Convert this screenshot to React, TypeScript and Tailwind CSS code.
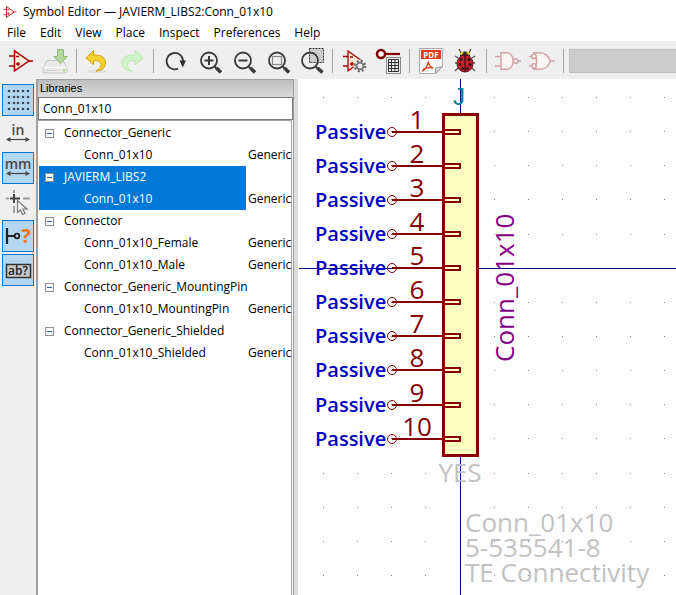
import React from "react";

type IconProps = { children: React.ReactNode };

function Icon({ children }: IconProps) {
  return (
    <svg viewBox="0 0 26 26" className="size-[26px]" fill="none" aria-hidden="true">
      {children}
    </svg>
  );
}

function ToolButton({ label, children, disabled }: { label: string; children: React.ReactNode; disabled?: boolean }) {
  return (
    <button type="button" aria-label={label} title={label} disabled={disabled} className="flex h-8 w-[34px] shrink-0 items-center justify-center">
      <Icon>{children}</Icon>
    </button>
  );
}

function Separator() {
  return (
    <div className="flex w-[9px] shrink-0 justify-center">
      <div className="h-6 w-px bg-[#a5a5a5]" />
    </div>
  );
}

function OpAmp() {
  return (
    <g stroke="#a80000" strokeWidth="1.3">
      <path d="M1 8h5M1 18h5M20 13h5" />
      <path d="M6.5 2.8 21 13 6.5 22.8z" fill="#fbeedd" strokeWidth="1.5" />
      <path d="M8 8.5h3M8 16h4M10 14v4" />
    </g>
  );
}

function Lens({ children, cx = 13 }: { children?: React.ReactNode; cx?: number }) {
  return (
    <g stroke="#3a3a3a">
      <circle cx={cx} cy="12.5" r="8" strokeWidth="1.8" />
      <path d={cx === 13 ? "M18.5 18.5 20.5 20.5" : "M17.5 18.5 19.5 20.5"} strokeWidth="2" />
      <path d={cx === 13 ? "M20.5 20 25 24.5" : "M19.5 20 24.5 24.5"} strokeWidth="3.6" />
      {children}
    </g>
  );
}

function Gear() {
  return (
    <g>
      <circle cx="19" cy="18" r="6.5" fill="#efefef" />
      <circle cx="19" cy="18" r="5.3" stroke="#626262" strokeWidth="1.8" strokeDasharray="2.1 2.06" />
      <circle cx="19" cy="18" r="3.4" stroke="#707070" strokeWidth="1.8" fill="#f2f2f2" />
    </g>
  );
}

function Ladybug() {
  return (
    <g>
      <path d="M9 5 7 1M17 5l2-4M6 10 3 8M20 10l3-2M5 15H3M21 15h2M6 20l-3 3M20 20l3 3" stroke="#555" strokeWidth="1.3" />
      <path d="M8 8C8 2 18 2 18 8z" fill="#333" />
      <path d="M8.5 6.5 11 4M17.5 6.5 15 4" stroke="#e6c819" strokeWidth="2" />
      <ellipse cx="13" cy="15.5" rx="8" ry="8.5" fill="#c91f2b" stroke="#5c1216" />
      <path d="M13 7v17" stroke="#3a1012" strokeWidth="1.2" />
      <g fill="#2a1a1a">
        <circle cx="9" cy="11.5" r="1.6" />
        <circle cx="17" cy="11.5" r="1.6" />
        <circle cx="8" cy="16.5" r="1.5" />
        <circle cx="18" cy="16.5" r="1.5" />
        <circle cx="10.5" cy="20.5" r="1.5" />
        <circle cx="15.5" cy="20.5" r="1.5" />
      </g>
    </g>
  );
}

function TopToolbar() {
  return (
    <div role="toolbar" aria-label="Main" className="flex h-[38px] shrink-0 items-center overflow-hidden bg-[#efefef] pt-0.5 pl-1">
      <ToolButton label="New symbol"><OpAmp /></ToolButton>
      <ToolButton label="Save" disabled>
        <path d="M5 12.5h16l4 7.5v4a1 1 0 0 1-1 1H2a1 1 0 0 1-1-1v-4z" fill="#e9e9e9" stroke="#c9c9c9" />
        <path d="M1.5 19.5h23" stroke="#fafafa" />
        <path d="M3.5 22.5h12" stroke="#d0d0d0" />
        <circle cx="22" cy="22.3" r="1.2" fill="#a9df8c" />
        <path d="M15.5 1.5h6v7h3.8l-6.8 7-6.8-7h3.800z" fill="#b3d59b" stroke="#8fb877" />
      </ToolButton>
      <Separator />
      <ToolButton label="Undo">
        <ellipse cx="12" cy="23.5" rx="10" ry="1.6" fill="#dedede" />
        <path d="M8.5 2.5 1 10l7.5 6.5V13c5-1 8 1 7.5 4.5-.4 2.5-2.5 4.2-5 5.5 6 0 9.5-3.5 9.5-8 0-5.5-4.500-8.500-12-8z" fill="#f4d12d" stroke="#cfa414" />
      </ToolButton>
      <ToolButton label="Redo" disabled>
        <path d="M16 2.5l8 7.5-8 7v-4c-5-1-8 1-7.5 4.5.4 2.5 2 4.2 4.5 5.5-6 0-10-3.5-10-8.5C3 9.5 8 6.5 16 7z" fill="#d3f3c8" stroke="#bce6ae" />
      </ToolButton>
      <Separator />
      <ToolButton label="Refresh">
        <path d="M16 20.7A8.2 8.2 0 1 1 21 13.5" stroke="#3a3a3a" strokeWidth="1.8" />
        <path d="M17.5 12.5h6.5l-3.2 7z" fill="#303030" />
      </ToolButton>
      <ToolButton label="Zoom in"><Lens><path d="M8.5 12.5h9M13 8v9" strokeWidth="2" /></Lens></ToolButton>
      <ToolButton label="Zoom out"><Lens><path d="M8.5 12.5h9" strokeWidth="2" /></Lens></ToolButton>
      <ToolButton label="Zoom to fit"><Lens><rect x="8.5" y="8.5" width="9" height="8" stroke="#8a8a8a" strokeWidth="1.2" /></Lens></ToolButton>
      <ToolButton label="Zoom to selection">
        <rect x="11.5" y="0.5" width="14" height="14" fill="#cccccc" stroke="#333" strokeDasharray="2 1" />
        <Lens cx={12} />
      </ToolButton>
      <Separator />
      <ToolButton label="Symbol properties">
        <g stroke="#a80000" strokeWidth="1.3">
          <path d="M2 8.5h5M2 18h5" />
          <path d="M7 3 21 13 7 22.8z" fill="#fbe9d2" />
          <path d="M9 9h3M9 16h4M11 14v4" />
        </g>
        <Gear />
      </ToolButton>
      <ToolButton label="Pin table">
        <circle cx="6" cy="6" r="4" stroke="#840000" strokeWidth="2.5" fill="#fff" />
        <path d="M10 6h15" stroke="#840000" strokeWidth="2.2" />
        <rect x="11.5" y="9.5" width="14" height="16" fill="#eee" stroke="#888" />
        <path d="M13.5 11.5h10v12h-10zM13.5 14.5h10M13.5 17.5h10M13.5 20.5h10M16.5 11.5v12M20 11.5v12" stroke="#333" />
      </ToolButton>
      <Separator />
      <ToolButton label="View as PDF">
        <path d="M1.5 0.5h23v18l-6.5 7H1.5z" fill="#fafafa" stroke="#aaa" />
        <rect x="3" y="2" width="20" height="9" fill="#e2381b" />
        <text x="13" y="9.5" textAnchor="middle" className="fill-white font-['Open_Sans',sans-serif] text-[8px] font-bold">PDF</text>
        <path d="M10 13.5c1 3 3 6 5 6.5M4 23c2.5-.5 4.5-2.5 6-8M5 21.500c3-2 6-2.500 10-1.500" stroke="#e2381b" strokeWidth="1.3" />
        <path d="M17.5 25v-5l7-1.5z" fill="#ddd" stroke="#999" />
      </ToolButton>
      <ToolButton label="Check symbol"><Ladybug /></ToolButton>
      <Separator />
      <ToolButton label="Standard body style" disabled>
        <g stroke="#d3a2a2" strokeWidth="1.5">
          <path d="M0 8.5h5.5M0 18h5.5M23 13h3" />
          <path d="M6 4.8h5.5c9 0 9 16.4 0 16.4H6z" fill="#fbf5f5" />
          <circle cx="20.8" cy="13" r="2.3" fill="#fbf5f5" />
        </g>
      </ToolButton>
      <ToolButton label="Alternate body style" disabled>
        <g stroke="#d3a2a2" strokeWidth="1.5">
          <path d="M0 8.5h3M0 18h3M22 13h4" />
          <path d="M5 4.8h6c5 0 9 4 10.5 8.2C20 17.5 16 21.2 11 21.2H5c3.5-5 3.5-11.400 0-16.400z" fill="#fbf5f5" />
          <circle cx="5" cy="8.5" r="2.2" fill="#fbf5f5" />
          <circle cx="5" cy="18" r="2.2" fill="#fbf5f5" />
        </g>
      </ToolButton>
      <Separator />
      <select aria-label="Unit" disabled className="ml-px h-6 min-w-0 flex-1 appearance-none border border-r-0 border-[#bfbfbf] bg-[#cccccc]" />
    </div>
  );
}

function SideButton({ label, active, children }: { label: string; active?: boolean; children: React.ReactNode }) {
  return (
    <button
      type="button"
      aria-label={label}
      aria-pressed={!!active}
      className={active ? "size-8 border border-[#0078d7] bg-[#b3d6f2]" : "size-8 border border-transparent"}
    >
      <svg viewBox="1 1 30 30" className="size-full" fill="none" aria-hidden="true">
        {children}
      </svg>
    </button>
  );
}

function UnitGlyph({ text }: { text: string }) {
  return (
    <g>
      <text x="16" y="17" textAnchor="middle" className="fill-[#484848] font-['Open_Sans',sans-serif] text-[14px] font-semibold">{text}</text>
      <path d="M6 21.5h20" stroke="#484848" strokeWidth="1.2" />
      <path d="M8.5 19 4 21.5 8.5 24zM23.5 19 28 21.5 23.5 24z" fill="#484848" />
    </g>
  );
}

const dotX = [7, 12, 16, 21, 26];
const dotY = [7, 13, 19, 25];

function SideToolbar() {
  return (
    <div role="toolbar" aria-label="Options" className="flex w-9 shrink-0 flex-col gap-0.5 bg-[#efefef] pt-[5px] pl-0.5">
      <SideButton label="Show grid" active>
        {dotY.map((y) => dotX.map((x) => <circle key={`${x}-${y}`} cx={x} cy={y} r="1.3" fill="#3b4650" />))}
      </SideButton>
      <SideButton label="Inches"><UnitGlyph text="in" /></SideButton>
      <SideButton label="Millimeters" active><UnitGlyph text="mm" /></SideButton>
      <SideButton label="Full-window crosshairs">
        <path d="M4 12.5h3M21 12.5h7M12 4v3M12 20v7" stroke="#a0a0a0" strokeWidth="2" />
        <path d="M8 12.5h10M12 8v9" stroke="#444" strokeWidth="2" />
        <path d="M15.5 14.5v12l3-2.5 2 4.5 2.5-1-2-4.5h4z" fill="#f4f4f4" stroke="#777" strokeWidth="1.2" />
      </SideButton>
      <SideButton label="Show pin electrical types" active>
        <path d="M5 8v16M5 16h7" stroke="#222" strokeWidth="2.2" />
        <circle cx="15" cy="16" r="2.3" stroke="#222" strokeWidth="1.8" />
        <text x="24" y="23" textAnchor="middle" className="fill-[#f0730f] font-['Open_Sans',sans-serif] text-[20px] font-bold">?</text>
      </SideButton>
      <SideButton label="Show hidden pins" active>
        <rect x="4.5" y="10.5" width="24" height="13" fill="#c9c9c9" stroke="#333" strokeWidth="1.5" />
        <text x="16" y="21" textAnchor="middle" className="fill-[#222] font-['Open_Sans',sans-serif] text-[12px] font-semibold">ab?</text>
      </SideButton>
    </div>
  );
}

type Library = { name: string; symbols: string[]; selected?: boolean };

const libraries: Library[] = [
  { name: "Connector_Generic", symbols: ["Conn_01x10"] },
  { name: "JAVIERM_LIBS2", symbols: ["Conn_01x10"], selected: true },
  { name: "Connector", symbols: ["Conn_01x10_Female", "Conn_01x10_Male"] },
  { name: "Connector_Generic_MountingPin", symbols: ["Conn_01x10_MountingPin"] },
  { name: "Connector_Generic_Shielded", symbols: ["Conn_01x10_Shielded"] },
];

function LibraryTree() {
  return (
    <ul className="mr-px min-h-0 flex-1 overflow-hidden border-t border-r border-[#a0a0a0] bg-white pt-px pl-px">
      {libraries.map((lib) => {
        const fill = lib.selected ? "bg-[#0078d7] text-white" : "";
        return (
          <li key={lib.name}>
            <div className="flex h-[22px]">
              <div className={`flex flex-1 items-center gap-2.5 pl-1.5 whitespace-nowrap ${fill}`}>
                <button type="button" aria-label={`Collapse ${lib.name}`} className="flex size-[9px] shrink-0 items-center justify-center border border-[#919191] bg-white">
                  <span className="h-px w-[5px] bg-[#3b55a5]" />
                </button>
                <span>{lib.name}</span>
              </div>
              <div className="w-[45px]" />
            </div>
            <ul>
              {lib.symbols.map((symbol) => (
                <li key={symbol} className="flex h-[22px] items-center">
                  <span className={`flex h-full flex-1 items-center pl-[45px] whitespace-nowrap ${fill}`}>{symbol}</span>
                  <span className="w-[45px] pl-0.5">Generic</span>
                </li>
              ))}
            </ul>
          </li>
        );
      })}
    </ul>
  );
}

const pins = [1, 2, 3, 4, 5, 6, 7, 8, 9, 10];
const pitch = 34.14;

function gridPath(columns: number, rows: number) {
  let d = "";
  for (let r = 0; r < rows; r++) {
    for (let c = 0; c < columns; c++) {
      d += `M${25 + Math.round(c * pitch)} ${18 + Math.round(r * pitch)}h1v1h-1z`;
    }
  }
  return d;
}

const gridDots = gridPath(56, 32);

/* Symbol drawing; the group's origin is the symbol anchor. */
function Canvas() {
  return (
    <svg className="min-w-0 flex-1 bg-white font-['Open_Sans','Noto_Sans',sans-serif]" role="img" aria-label="Conn_01x10 symbol">
      <path d={gridDots} fill="#848484" shapeRendering="crispEdges" />
      <g transform="translate(162 189)">
        <path d="M0.5-400V2000M-161 0.5H2000" stroke="#000084" shapeRendering="crispEdges" />
        <g className="fill-[#c2c2c2] text-[26px]">
          <text x="0" y="214" textAnchor="middle">YES</text>
          <text x="5" y="264">Conn_01x10</text>
          <text x="5" y="289">5-535541-8</text>
          <text x="5" y="314">TE Connectivity</text>
        </g>
        <text x="-1" y="-163" textAnchor="middle" className="fill-[#008484] font-['Liberation_Sans',sans-serif] text-[24px]">J</text>
        <text transform="translate(54 94) rotate(-90)" className="fill-[#840084] text-[26px]">Conn_01x10</text>
        {pins.map((n) => {
          const y = -136.5 + (n - 1) * pitch;
          return (
            <g key={n} transform={`translate(0 ${Math.round(y)})`}>
              <text x="-145" y="7" className="fill-[#0000c2] text-[20px] font-semibold">Passive</text>
              <text x="-43" y="-3" textAnchor="middle" className="fill-[#840000] text-[26px]">{n}</text>
              <circle cx="-68" cy="0" r="4.5" fill="none" stroke="#840000" />
              <path d="M-68 0h51" stroke="#840000" strokeWidth="2" />
            </g>
          );
        })}
        <rect x="-16.5" y="-153.5" width="34" height="341" fill="#ffffc2" stroke="#840000" strokeWidth="3" />
        {pins.map((n) => (
          <rect key={n} x="-16" y={Math.round(-136.5 + (n - 1) * pitch) - 2} width="16" height="4" fill="#ffffc2" stroke="#840000" strokeWidth="2" />
        ))}
      </g>
    </svg>
  );
}

const menus = ["File", "Edit", "View", "Place", "Inspect", "Preferences", "Help"];

export default function App() {
  return (
    <div className="flex h-screen flex-col overflow-hidden bg-white font-['Open_Sans','Noto_Sans',sans-serif] text-[12px] text-black">
      <header className="flex h-6 shrink-0 items-center gap-1.5 pl-[3px]">
        <svg viewBox="0 0 26 26" className="size-3.5" fill="none" aria-hidden="true"><OpAmp /></svg>
        <h1>Symbol Editor — JAVIERM_LIBS2:Conn_01x10</h1>
      </header>
      <nav className="flex h-[17px] shrink-0 items-center gap-3.5 pl-[7px]">
        {menus.map((m) => (
          <button key={m} type="button">{m}</button>
        ))}
      </nav>
      <TopToolbar />
      <main className="flex min-h-0 flex-1">
        <SideToolbar />
        <section className="flex w-[258px] shrink-0 flex-col border-t border-r border-l-2 border-[#a0a0a0] bg-white">
          <label htmlFor="filter" className="h-[17px] bg-linear-to-b from-[#bdbdbd] to-[#dadada] pl-0.5 font-['Liberation_Sans',sans-serif] text-[11px] leading-4">
            Libraries
          </label>
          <input id="filter" type="text" defaultValue="Conn_01x10" className="h-[23px] w-full border border-[#7a7a7a] bg-white px-1 outline-none" />
          <LibraryTree />
        </section>
        <div className="w-1 shrink-0 bg-[#dcdcdc]" />
        <Canvas />
      </main>
    </div>
  );
}
